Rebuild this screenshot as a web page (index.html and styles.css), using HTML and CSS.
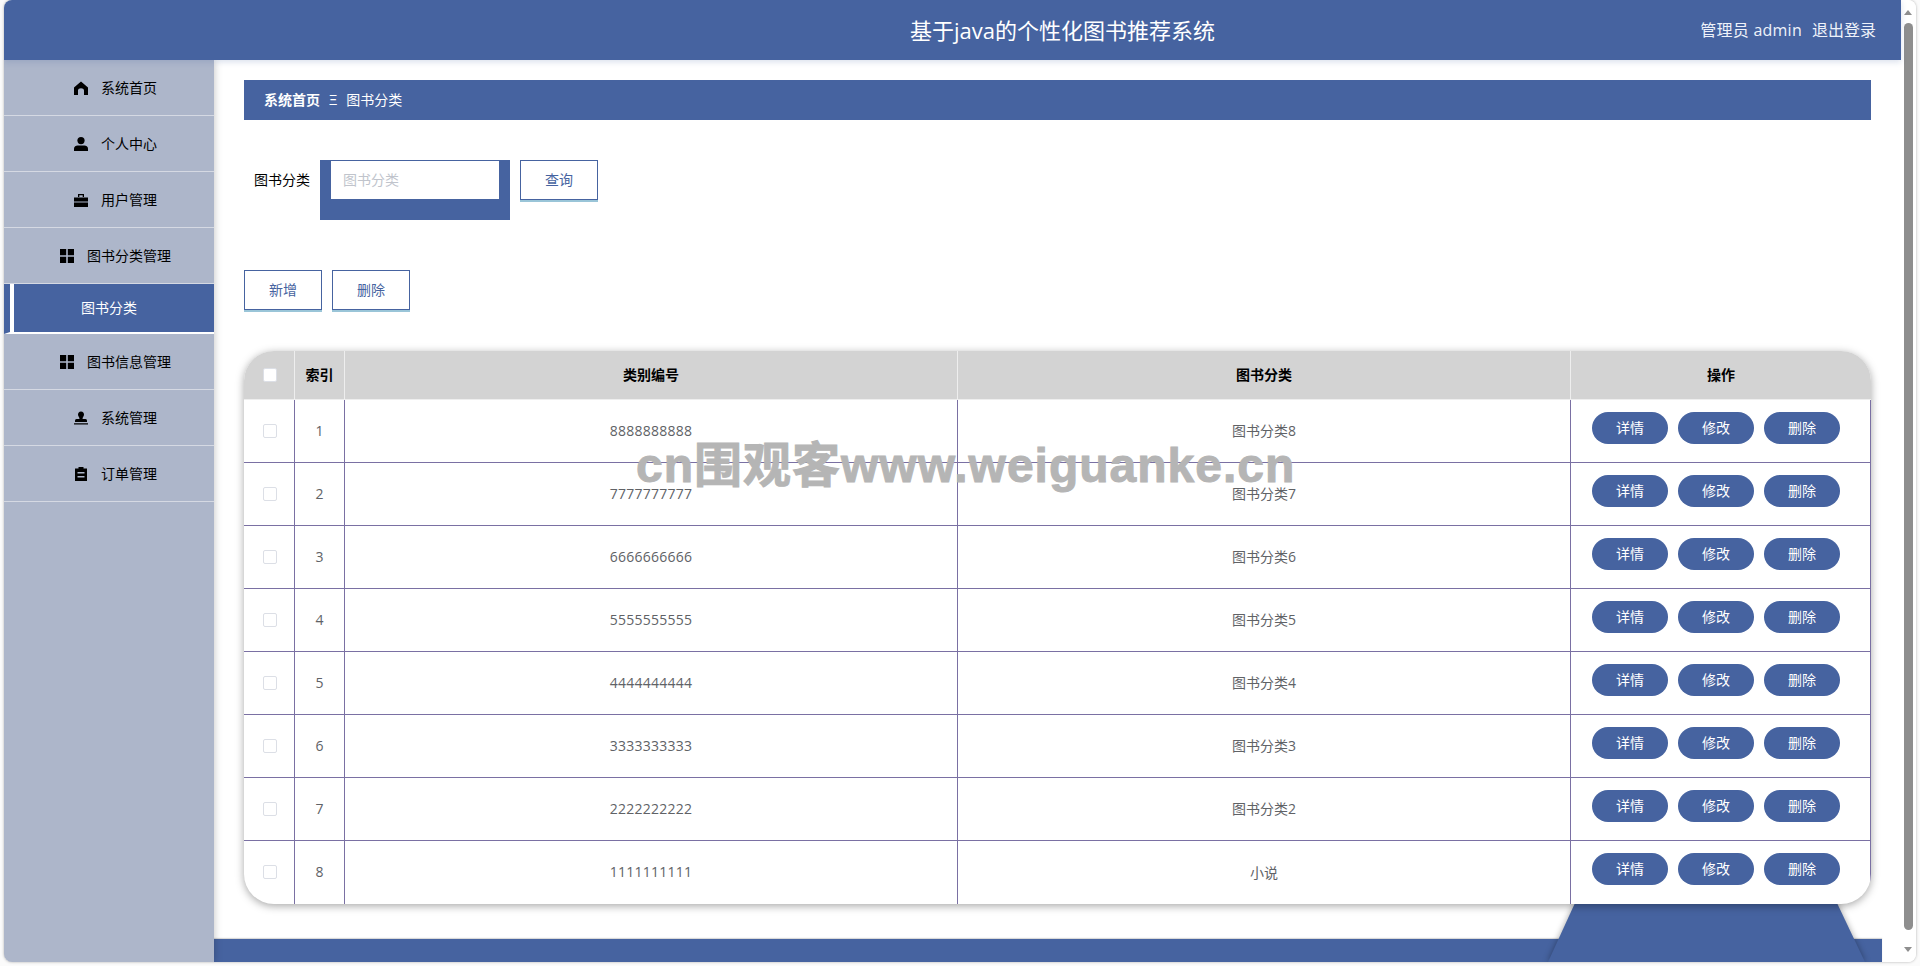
FILE: index.html
```html
<!DOCTYPE html>
<html>
<head>
    <title>基于java的个性化图书推荐系统</title>
    <link rel="stylesheet" href="styles.css">
</head>
<body>
    <div class="window">
        <div class="page">
            <!-- Top bar -->
            <header class="topbar">
                <div class="title">基于java的个性化图书推荐系统</div>
                <div class="user-info">
                    <span class="user-name">管理员 admin</span>
                    <span>退出登录</span>
                </div>
            </header>

            <div class="body-row">
                <!-- Left menu -->
                <nav class="sidebar">
                    <a class="nav-item">
                        <svg class="nav-icon" viewBox="0 0 14 14"><path d="M7 .5 14 6.500V14H10V9.500C10 6.500 4 6.500 4 9.500V14H0V6.500Z"/></svg>
                        <span>系统首页</span>
                    </a>
                    <a class="nav-item">
                        <svg class="nav-icon" viewBox="0 0 14 14"><circle cx="7" cy="3.600" r="3.600"/><path d="M0 14V11.500C0 9.500 2 8.500 3.500 8.500H10.500C12 8.500 14 9.500 14 11.500V14Z"/></svg>
                        <span>个人中心</span>
                    </a>
                    <a class="nav-item">
                        <svg class="nav-icon" viewBox="0 0 14 14"><path d="M4 4V1H10V4H8.700V2.200H5.300V4ZM0 4.500H14V8.500H0ZM0 9.500H14V14H0Z"/></svg>
                        <span>用户管理</span>
                    </a>
                    <a class="nav-item">
                        <svg class="nav-icon" viewBox="0 0 14 14"><path d="M0 0H6.200V6.200H0ZM7.800 0H14V6.200H7.800ZM0 7.800H6.200V14H0ZM7.800 7.800H14V14H7.800Z"/></svg>
                        <span>图书分类管理</span>
                    </a>
                    <div class="nav-active"><a>图书分类</a></div>
                    <a class="nav-item">
                        <svg class="nav-icon" viewBox="0 0 14 14"><path d="M0 0H6.200V6.200H0ZM7.800 0H14V6.200H7.800ZM0 7.800H6.200V14H0ZM7.800 7.800H14V14H7.800Z"/></svg>
                        <span>图书信息管理</span>
                    </a>
                    <a class="nav-item">
                        <svg class="nav-icon" viewBox="0 0 14 14"><path d="M7 .5C9 .5 10 2 10 3.500 10 5.500 8.500 6 8.500 8H11.500C12.500 8 13 8.800 13 10V11H1V10C1 8.800 1.500 8 2.500 8H5.500C5.500 6 4 5.500 4 3.500 4 2 5 .5 7 .5ZM0 12.300H14V13.500H0Z"/></svg>
                        <span>系统管理</span>
                    </a>
                    <a class="nav-item">
                        <svg class="nav-icon" viewBox="0 0 14 14"><path fill-rule="evenodd" d="M4.500 0H9.500V1.500H13V14H1V1.500H4.500ZM3.500 5V6.500H10.500V5ZM3.500 9V10.500H10.500V9Z"/></svg>
                        <span>订单管理</span>
                    </a>
                </nav>

                <main class="main">
                    <div class="breadcrumb">
                        <span class="crumb-home">系统首页</span>
                        <span class="crumb-sep">Ξ</span>
                        <span>图书分类</span>
                    </div>

                    <form class="search-form">
                        <label class="search-label">图书分类</label>
                        <div class="input-box">
                            <input type="text" placeholder="图书分类">
                        </div>
                        <button type="button" class="btn">查询</button>
                    </form>

                    <div class="actions">
                        <button type="button" class="btn">新增</button>
                        <button type="button" class="btn">删除</button>
                    </div>

                    <div class="table-wrap">
                        <table class="data-table">
                            <thead>
                                <tr>
                                    <th class="col-check"><span class="checkbox"></span></th>
                                    <th class="col-index">索引</th>
                                    <th>类别编号</th>
                                    <th>图书分类</th>
                                    <th class="col-ops">操作</th>
                                </tr>
                            </thead>
                            <tbody>
                                <tr>
                                    <td class="check"><span class="checkbox"></span></td>
                                    <td>1</td>
                                    <td class="code">8888888888</td>
                                    <td>图书分类8</td>
                                    <td class="ops"><button class="pill">详情</button><button class="pill">修改</button><button class="pill">删除</button></td>
                                </tr>
                                <tr>
                                    <td class="check"><span class="checkbox"></span></td>
                                    <td>2</td>
                                    <td class="code">7777777777</td>
                                    <td>图书分类7</td>
                                    <td class="ops"><button class="pill">详情</button><button class="pill">修改</button><button class="pill">删除</button></td>
                                </tr>
                                <tr>
                                    <td class="check"><span class="checkbox"></span></td>
                                    <td>3</td>
                                    <td class="code">6666666666</td>
                                    <td>图书分类6</td>
                                    <td class="ops"><button class="pill">详情</button><button class="pill">修改</button><button class="pill">删除</button></td>
                                </tr>
                                <tr>
                                    <td class="check"><span class="checkbox"></span></td>
                                    <td>4</td>
                                    <td class="code">5555555555</td>
                                    <td>图书分类5</td>
                                    <td class="ops"><button class="pill">详情</button><button class="pill">修改</button><button class="pill">删除</button></td>
                                </tr>
                                <tr>
                                    <td class="check"><span class="checkbox"></span></td>
                                    <td>5</td>
                                    <td class="code">4444444444</td>
                                    <td>图书分类4</td>
                                    <td class="ops"><button class="pill">详情</button><button class="pill">修改</button><button class="pill">删除</button></td>
                                </tr>
                                <tr>
                                    <td class="check"><span class="checkbox"></span></td>
                                    <td>6</td>
                                    <td class="code">3333333333</td>
                                    <td>图书分类3</td>
                                    <td class="ops"><button class="pill">详情</button><button class="pill">修改</button><button class="pill">删除</button></td>
                                </tr>
                                <tr>
                                    <td class="check"><span class="checkbox"></span></td>
                                    <td>7</td>
                                    <td class="code">2222222222</td>
                                    <td>图书分类2</td>
                                    <td class="ops"><button class="pill">详情</button><button class="pill">修改</button><button class="pill">删除</button></td>
                                </tr>
                                <tr>
                                    <td class="check"><span class="checkbox"></span></td>
                                    <td>8</td>
                                    <td class="code">1111111111</td>
                                    <td>小说</td>
                                    <td class="ops"><button class="pill">详情</button><button class="pill">修改</button><button class="pill">删除</button></td>
                                </tr>
                            </tbody>
                        </table>
                    </div>

                    <footer class="footer"></footer>
                    <!-- Trapezoid that sticks out above the footer, behind the table -->
                    <div class="footer-tab"><div class="footer-tab-shape"></div></div>
                </main>
            </div>
        </div>

        <!-- Scrollbar of the screenshot -->
        <div class="scrollbar">
            <span class="arrow-up"></span>
            <span class="thumb"></span>
            <span class="arrow-down"></span>
        </div>
    </div>

    <div class="watermark">cn围观客www.weiguanke.cn</div>
</body>
</html>
```

FILE: styles.css
```css
* {
    box-sizing: border-box;
}

body {
    margin: 0;
    height: 966px;
    overflow: hidden;
    position: relative;
    background-color: #fbfbfb;
    font-family: "Open Sans", "Noto Sans CJK SC", sans-serif;
    font-size: 14px;
}

.window {
    display: flex;
    width: 1912px;
    height: 962px;
    margin-left: 4px;
    border-radius: 8px;
    overflow: hidden;
    background-color: white;
    box-shadow: 0 0 3px rgba(0, 0, 0, 0.3);
}

.page {
    width: 1897px;
    display: flex;
    flex-direction: column;
}

/* Top bar */
.topbar {
    display: flex;
    align-items: center;
    flex: none;
    height: 60px;
    padding-left: 906px;
    padding-right: 25px;
    background-color: #4663a0;
    color: #fff;
    box-shadow: 0 2px 6px rgba(70, 99, 160, 0.2);
    position: relative;
    z-index: 2;
}

.title {
    font-size: 22px;
    line-height: 60px;
}

.user-info {
    display: flex;
    gap: 10px;
    margin-left: auto;
    padding-bottom: 2px;
    font-size: 16px;
    color: #eef2fa;
}

.user-name {
    letter-spacing: 0.25px;
}

.body-row {
    display: flex;
    flex: 1;
    min-height: 0;
}

/* Left menu */
.sidebar {
    flex: none;
    width: 210px;
    background-color: #adb6ca;
    box-shadow: 0 0 8px rgba(0, 0, 0, 0.25);
    position: relative;
    z-index: 1;
}

.nav-item {
    display: flex;
    align-items: center;
    justify-content: center;
    gap: 13px;
    height: 56px;
    padding-left: 13px;
    border-bottom: 1px solid #d5d9e3;
    color: #000;
}

.nav-item span {
    padding-bottom: 2px;
}

.nav-icon {
    width: 14px;
    height: 14px;
    fill: #000;
}

.nav-active {
    height: 50px;
    border-left: 6px solid #4663a0;
    border-bottom: 2px solid #fff;
}

.nav-active a {
    display: block;
    height: 48px;
    line-height: 48px;
    border-left: 4px solid #fff;
    padding-right: 10px;
    background-color: #4663a0;
    color: #fff;
    text-align: center;
}

/* Main area */
.main {
    flex: 1;
    position: relative;
    padding: 20px 30px 0 30px;
}

.breadcrumb {
    display: flex;
    align-items: center;
    height: 40px;
    padding-left: 20px;
    padding-bottom: 2px;
    background-color: #4663a0;
    color: #fff;
}

.crumb-home {
    font-weight: bold;
}

.crumb-sep {
    margin: 0 9px;
    font-size: 15px;
}

.search-form {
    display: flex;
    gap: 10px;
    margin-top: 40px;
    padding-left: 10px;
    height: 60px;
}

.search-label {
    line-height: 40px;
    color: #000;
}

.input-box {
    width: 190px;
    height: 60px;
    padding: 1px 11px;
    background-color: #4663a0;
}

.input-box input {
    display: block;
    width: 168px;
    height: 38px;
    padding: 0 12px 2px;
    border: none;
    outline: none;
    font-family: inherit;
    font-size: 14px;
}

.input-box input::placeholder {
    color: #c0c4cc;
}

.btn {
    width: 78px;
    height: 40px;
    padding: 0 0 2px;
    border: 1px solid #4663a0;
    background-color: #fff;
    color: #4663a0;
    font-family: inherit;
    font-size: 14px;
    box-shadow: 0 2px 0 #9ac5d8;
}

.actions {
    display: flex;
    gap: 10px;
    height: 42px;
    margin-top: 50px;
}

/* Table */
.table-wrap {
    position: relative;
    z-index: 1;
    margin-top: 39px;
    height: 553px;
    border-radius: 30px;
    overflow: hidden;
    background-color: #fff;
    box-shadow: 0 2px 8px rgba(0, 0, 0, 0.35);
}

.data-table {
    width: 100%;
    border-collapse: separate;
    border-spacing: 0;
    table-layout: fixed;
}

.data-table th {
    height: 49px;
    padding: 0 0 2px;
    background-color: #d3d3d3;
    border-right: 1px solid #eee;
    border-bottom: 1px solid #eee;
    color: #000;
    font-weight: bold;
    text-align: center;
}

.data-table th:last-child {
    border-right: none;
}

.data-table th.col-check {
    width: 51px;
    padding-left: 2px;
}

.col-index {
    width: 50px;
}

.col-ops {
    width: 300px;
}

.data-table td {
    height: 63px;
    padding: 0 0 2px;
    border-right: 1px solid #7a70a3;
    border-bottom: 1px solid #7a70a3;
    color: #606266;
    text-align: center;
}

.data-table tr:last-child td {
    border-bottom: none;
}

.data-table td.check {
    padding-left: 2px;
}

.data-table td.code {
    letter-spacing: 0.25px;
}

.checkbox {
    display: inline-block;
    width: 14px;
    height: 14px;
    margin-top: 5px;
    border: 1px solid #dcdfe6;
    border-radius: 2px;
    background-color: #fff;
}

.data-table td.ops {
    padding: 12px 0 0 21px;
    vertical-align: top;
    text-align: left;
}

.pill {
    width: 76px;
    height: 32px;
    margin-right: 10px;
    padding: 0 0 2px;
    border: none;
    border-radius: 16px;
    background-color: #4663a0;
    color: #fff;
    font-family: inherit;
    font-size: 14px;
}

/* Footer */
.footer {
    height: 23px;
    margin: 35px -11px 0 -30px;
    background-color: #4663a0;
    box-shadow: 0 -1px 1px rgba(0, 0, 0, 0.15);
}

.footer-tab {
    position: absolute;
    left: 1334px;
    top: 843px;
    width: 317px;
    height: 59px;
    filter: drop-shadow(0 0 3px rgba(0, 0, 0, 0.35));
}

.footer-tab-shape {
    height: 100%;
    background-color: #4663a0;
    clip-path: polygon(27px 0, 289px 0, 100% 100%, 0 100%);
}

/* Scrollbar */
.scrollbar {
    flex: none;
    width: 15px;
    display: flex;
    flex-direction: column;
    align-items: flex-start;
    padding: 10px 0 0 3px;
    background-color: #fff;
}

.arrow-up {
    border-left: 4.5px solid transparent;
    border-right: 4.5px solid transparent;
    border-bottom: 5px solid #8e8e8e;
}

.thumb {
    width: 9px;
    height: 907px;
    margin-top: 8px;
    border-radius: 5px;
    background-color: #8e8e8e;
}

.arrow-down {
    margin-top: 17px;
    border-left: 4.5px solid transparent;
    border-right: 4.5px solid transparent;
    border-top: 5px solid #8e8e8e;
}

/* Watermark over the table */
.watermark {
    position: absolute;
    left: 636px;
    top: 435px;
    font-family: "Liberation Sans", "Noto Sans CJK SC", sans-serif;
    font-size: 48px;
    font-weight: bold;
    line-height: 62px;
    letter-spacing: 1px;
    -webkit-text-stroke: 1px #b5b5b5;
    white-space: nowrap;
    color: #b5b5b5;
    z-index: 5;
}
```
